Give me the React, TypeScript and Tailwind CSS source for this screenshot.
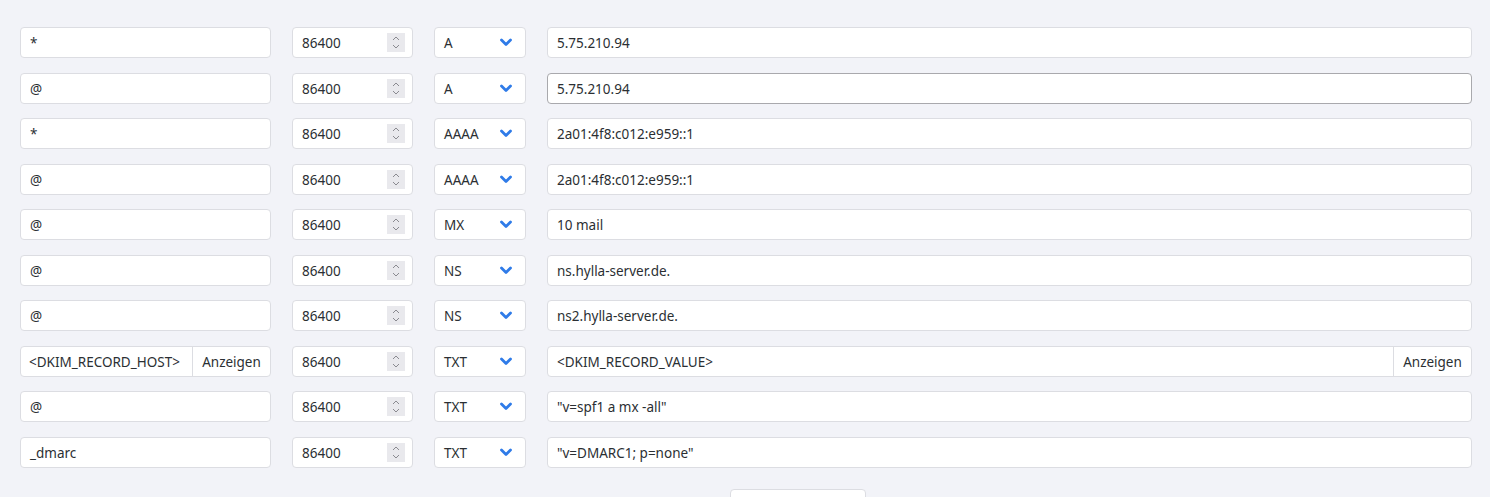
import React from "react";

type Row = { host: string; type: string; value: string; dkim?: boolean; focus?: boolean };

const rows: Row[] = [
  { host: "*", type: "A", value: "5.75.210.94" },
  { host: "@", type: "A", value: "5.75.210.94", focus: true },
  { host: "*", type: "AAAA", value: "2a01:4f8:c012:e959::1" },
  { host: "@", type: "AAAA", value: "2a01:4f8:c012:e959::1" },
  { host: "@", type: "MX", value: "10 mail" },
  { host: "@", type: "NS", value: "ns.hylla-server.de." },
  { host: "@", type: "NS", value: "ns2.hylla-server.de." },
  { host: "<DKIM_RECORD_HOST>", type: "TXT", value: "<DKIM_RECORD_VALUE>", dkim: true },
  { host: "@", type: "TXT", value: '"v=spf1 a mx -all"' },
  { host: "_dmarc", type: "TXT", value: '"v=DMARC1; p=none"' },
];

function Spinner() {
  return (
    <div className="w-[18px] h-[19px] bg-[#e9e9ed] flex flex-col items-center justify-center gap-[3px]">
      <svg width="8" height="5" viewBox="0 0 8 5"><path d="M1 4 L4 1 L7 4" fill="none" stroke="#8a8a90" strokeWidth="1" /></svg>
      <svg width="8" height="5" viewBox="0 0 8 5"><path d="M1 1 L4 4 L7 1" fill="none" stroke="#8a8a90" strokeWidth="1" /></svg>
    </div>
  );
}

function Chevron() {
  return (
    <svg width="12" height="9" viewBox="0 0 12 9">
      <path d="M1.5 2 L6 6.5 L10.5 2" fill="none" stroke="#2f7be8" strokeWidth="2.8" strokeLinecap="round" strokeLinejoin="round" />
    </svg>
  );
}

export default function App() {
  const font = { fontFamily: '"Noto Sans", "Open Sans", sans-serif' };
  const box = "bg-white border border-[#dcdde2] rounded-[4px]";
  return (
    <div className="w-[1490px] h-[497px] bg-[#f2f3f8] overflow-hidden text-[13.5px] text-[#2b2f33]" style={font}>
      <div className="pt-[27px] pl-[20px] pr-[18px] flex flex-col gap-[14.5px]">
        {rows.map((r, i) => (
          <div key={i} className="flex h-[31px] gap-[21px]">
            {r.dkim ? (
              <div className={"w-[251px] flex " + box}>
                <div className="flex-1 flex items-center pl-[8px] pt-[2px]">{r.host}</div>
                <div className="w-[78px] flex items-center justify-center border-l border-[#dcdde2] pt-[2px]">Anzeigen</div>
              </div>
            ) : (
              <div className={"w-[251px] flex items-center pl-[9px] pt-[2px] " + box}>{r.host}</div>
            )}
            <div className={"w-[121px] flex items-center justify-between pl-[9px] pr-[7px] " + box}>
              <span className="pt-[2px]">86400</span>
              <Spinner />
            </div>
            <div className={"w-[92px] flex items-center justify-between pl-[9px] pr-[13px] " + box}>
              <span className="pt-[2px]">{r.type}</span>
              <Chevron />
            </div>
            {r.dkim ? (
              <div className={"flex-1 flex " + box}>
                <div className="flex-1 flex items-center pl-[9px] pt-[2px]">{r.value}</div>
                <div className="w-[78px] flex items-center justify-center border-l border-[#dcdde2] pt-[2px]">Anzeigen</div>
              </div>
            ) : (
              <div
                className={
                  r.focus
                    ? "flex-1 flex items-center bg-white border border-[#a9a9ad] rounded-[4px] pl-[9px] pt-[2px]"
                    : "flex-1 flex items-center bg-white border border-[#dcdde2] rounded-[4px] pl-[9px] pt-[2px]"
                }
              >
                {r.value}
              </div>
            )}
          </div>
        ))}
      </div>
      <div className="flex justify-start pl-[730px] mt-[21px]">
        <div className="w-[136px] h-[30px] bg-white border border-[#dcdde2] rounded-[4px]"></div>
      </div>
    </div>
  );
}
